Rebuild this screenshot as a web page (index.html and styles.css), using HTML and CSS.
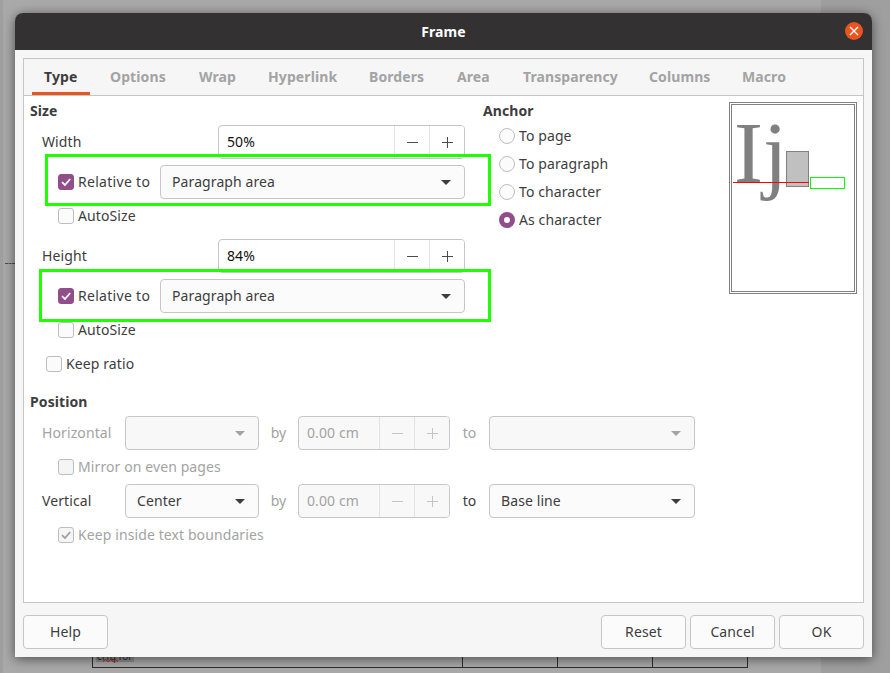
FILE: index.html
```html
<!DOCTYPE html>
<html lang="en">

<head>
    <meta charset="UTF-8">
    <title>Frame</title>
    <link rel="stylesheet" href="styles.css">
</head>

<body>
    <!-- bits of the document behind the dialog -->
    <div class="doc-page">
        <div class="doc-dash"></div>
        <div class="doc-table">
            <div class="doc-cell doc-cell-first">
                <span class="doc-word">crfq for</span>
                <svg class="doc-squiggle" width="16" height="5" viewBox="0 0 16 5"><path d="M0 3.5L2.5 1.5L5 3.5L7.5 1.5L10 3.5L12.5 1.5L15 3.5" stroke="#b02020" fill="none"/></svg>
            </div>
            <div class="doc-cell"></div>
            <div class="doc-cell"></div>
            <div class="doc-cell"></div>
        </div>
    </div>

    <div class="dialog">
        <div class="titlebar">
            <span class="title">Frame</span>
            <span class="close">
                <svg width="10" height="10" viewBox="0 0 10 10"><path d="M1 1L9 9M9 1L1 9" stroke="#fff" stroke-width="1.4" fill="none"/></svg>
            </span>
        </div>

        <div class="body">
            <div class="notebook">
                <div class="tabs">
                    <div class="tab active"><span>Type</span></div>
                    <div class="tab"><span>Options</span></div>
                    <div class="tab"><span>Wrap</span></div>
                    <div class="tab"><span>Hyperlink</span></div>
                    <div class="tab"><span>Borders</span></div>
                    <div class="tab"><span>Area</span></div>
                    <div class="tab"><span>Transparency</span></div>
                    <div class="tab"><span>Columns</span></div>
                    <div class="tab"><span>Macro</span></div>
                </div>

                <div class="panel">
                    <div class="top">
                        <div class="size-col">
                            <div class="heading">Size</div>

                            <div class="row field-row">
                                <label class="field-label">Width</label>
                                <div class="spin spin-wide">
                                    <span class="spin-value">50%</span>
                                    <span class="spin-btn"><svg width="11" height="11" viewBox="0 0 11 11"><path d="M0 5.5H11" stroke="#4a4a4a" fill="none"/></svg></span>
                                    <span class="spin-btn"><svg width="11" height="11" viewBox="0 0 11 11"><path d="M0 5.5H11M5.5 0V11" stroke="#4a4a4a" fill="none"/></svg></span>
                                </div>
                            </div>
                            <div class="row relative-row">
                                <span class="check on"><svg width="12" height="12" viewBox="0 0 12 12"><path d="M2 6.2L5 9L10.2 3" stroke="#fff" stroke-width="1.8" fill="none"/></svg></span>
                                <label class="relative-label">Relative to</label>
                                <div class="select select-wide"><span>Paragraph area</span><i class="arrow"></i></div>
                            </div>
                            <div class="check-row auto-row">
                                <span class="check"></span>
                                <label>AutoSize</label>
                            </div>

                            <div class="row field-row height-row">
                                <label class="field-label">Height</label>
                                <div class="spin spin-wide">
                                    <span class="spin-value">84%</span>
                                    <span class="spin-btn"><svg width="11" height="11" viewBox="0 0 11 11"><path d="M0 5.5H11" stroke="#4a4a4a" fill="none"/></svg></span>
                                    <span class="spin-btn"><svg width="11" height="11" viewBox="0 0 11 11"><path d="M0 5.5H11M5.5 0V11" stroke="#4a4a4a" fill="none"/></svg></span>
                                </div>
                            </div>
                            <div class="row relative-row">
                                <span class="check on"><svg width="12" height="12" viewBox="0 0 12 12"><path d="M2 6.2L5 9L10.2 3" stroke="#fff" stroke-width="1.8" fill="none"/></svg></span>
                                <label class="relative-label">Relative to</label>
                                <div class="select select-wide"><span>Paragraph area</span><i class="arrow"></i></div>
                            </div>
                            <div class="check-row auto-row">
                                <span class="check"></span>
                                <label>AutoSize</label>
                            </div>

                            <div class="check-row ratio-row">
                                <span class="check"></span>
                                <label>Keep ratio</label>
                            </div>
                        </div>

                        <div class="anchor-col">
                            <div class="heading">Anchor</div>
                            <div class="radio-row"><span class="radio"></span><label>To page</label></div>
                            <div class="radio-row"><span class="radio"></span><label>To paragraph</label></div>
                            <div class="radio-row"><span class="radio"></span><label>To character</label></div>
                            <div class="radio-row"><span class="radio on"></span><label>As character</label></div>
                        </div>

                        <svg class="preview" width="128" height="192" viewBox="0 0 128 192">
                            <rect x="0.5" y="0.5" width="127" height="191" fill="#fff" stroke="#808080"/>
                            <rect x="2.5" y="2.5" width="123" height="187" fill="#fff" stroke="#808080"/>
                            <text x="5" y="80" class="preview-text">Ij</text>
                            <rect x="57.5" y="49.5" width="22" height="35" fill="#c0c0c0" stroke="#808080"/>
                            <path d="M4 80.5H80" stroke="#ff0000" fill="none"/>
                            <rect x="81.5" y="75.5" width="34" height="11" fill="#fff" stroke="#00ff00"/>
                        </svg>
                    </div>

                    <div class="heading position-heading">Position</div>

                    <div class="row pos-row off">
                        <label class="pos-label">Horizontal</label>
                        <div class="select select-pos disabled"><span></span><i class="arrow"></i></div>
                        <label class="by">by</label>
                        <div class="spin spin-small disabled">
                            <span class="spin-value">0.00 cm</span>
                            <span class="spin-btn"><svg width="11" height="11" viewBox="0 0 11 11"><path d="M0 5.5H11" stroke="#c4c4c4" fill="none"/></svg></span>
                            <span class="spin-btn"><svg width="11" height="11" viewBox="0 0 11 11"><path d="M0 5.5H11M5.5 0V11" stroke="#c4c4c4" fill="none"/></svg></span>
                        </div>
                        <label class="to">to</label>
                        <div class="select select-to disabled"><span></span><i class="arrow"></i></div>
                    </div>
                    <div class="check-row auto-row off">
                        <span class="check disabled"></span>
                        <label>Mirror on even pages</label>
                    </div>
                    <div class="row pos-row">
                        <label class="pos-label">Vertical</label>
                        <div class="select select-pos"><span>Center</span><i class="arrow"></i></div>
                        <label class="by by-off">by</label>
                        <div class="spin spin-small disabled off">
                            <span class="spin-value">0.00 cm</span>
                            <span class="spin-btn"><svg width="11" height="11" viewBox="0 0 11 11"><path d="M0 5.5H11" stroke="#c4c4c4" fill="none"/></svg></span>
                            <span class="spin-btn"><svg width="11" height="11" viewBox="0 0 11 11"><path d="M0 5.5H11M5.5 0V11" stroke="#c4c4c4" fill="none"/></svg></span>
                        </div>
                        <label class="to">to</label>
                        <div class="select select-to"><span>Base line</span><i class="arrow"></i></div>
                    </div>
                    <div class="check-row auto-row off">
                        <span class="check disabled"><svg width="12" height="12" viewBox="0 0 12 12"><path d="M2 6.2L5 9L10.2 3" stroke="#9a9a9a" stroke-width="1.6" fill="none"/></svg></span>
                        <label>Keep inside text boundaries</label>
                    </div>
                </div>
            </div>

            <div class="footer">
                <button class="btn"><span>Help</span></button>
                <div class="footer-right">
                    <button class="btn"><span>Reset</span></button>
                    <button class="btn"><span>Cancel</span></button>
                    <button class="btn"><span>OK</span></button>
                </div>
            </div>
        </div>

        <!-- green marks drawn over the screenshot -->
        <div class="mark mark-one"></div>
        <div class="mark mark-two"></div>
    </div>
</body>

</html>
```

FILE: styles.css
```css
html,
body {
    margin: 0;
    height: 673px;
    overflow: hidden;
}

body {
    position: relative;
    width: 890px;
    padding: 13px 0 0 15px;
    box-sizing: border-box;
    background-color: #9f9f9f;
    font-family: "Noto Sans", sans-serif;
    font-size: 14px;
    letter-spacing: 0.1px;
    color: #3d3d3d;
}

label,
.select span,
.btn span {
    display: block;
    padding-bottom: 2px;
}

.doc-page {
    position: absolute;
    left: 3px;
    top: 0;
    width: 818px;
    height: 673px;
    background-color: #a9a9a9;
}

.doc-dash {
    position: absolute;
    left: 2px;
    top: 263px;
    width: 10px;
    border-top: 1px dashed #44505c;
}

.doc-table {
    position: absolute;
    left: 89px;
    top: 640px;
    display: flex;
    height: 27px;
    border-bottom: 1px solid #2e2e2e;
}

.doc-cell {
    width: 94px;
    border-right: 1px solid #2e2e2e;
}

.doc-cell-first {
    position: relative;
    width: 369px;
    border-left: 1px solid #2e2e2e;
}

.doc-word {
    position: absolute;
    left: 3px;
    top: 10px;
    padding: 0 1px;
    background-color: #8e8e8e;
    font-size: 10px;
    line-height: 12px;
    white-space: nowrap;
    color: #2e2e2e;
}

.doc-squiggle {
    position: absolute;
    left: 10px;
    top: 18px;
}

.dialog {
    position: relative;
    width: 857px;
    height: 644px;
    border-radius: 9px 9px 0 0;
    background-color: #f6f6f6;
    box-shadow: 0 2px 12px rgba(0, 0, 0, 0.55);
}

.titlebar {
    position: relative;
    display: flex;
    align-items: center;
    justify-content: center;
    height: 37px;
    border-radius: 8px 8px 0 0;
    background-color: #333131;
}

.title {
    color: #fff;
    font-weight: bold;
}

.close {
    position: absolute;
    right: 9px;
    top: 9px;
    display: flex;
    align-items: center;
    justify-content: center;
    width: 18px;
    height: 18px;
    border-radius: 50%;
    background-color: #e95420;
}

.body {
    padding: 8px 8px 0;
}

.notebook {
    height: 543px;
    border: 1px solid #c6c6c6;
    background-color: #fff;
}

.tabs {
    display: grid;
    grid-template-columns: 66px 89px 69px 101px 88px 66px 126px 93px 67px;
    height: 36px;
    padding-left: 8px;
    border-bottom: 1px solid #c6c6c6;
    background-color: #f6f6f6;
    font-weight: bold;
    color: #a3a3a3;
}

.tab span {
    display: block;
    box-sizing: border-box;
    width: fit-content;
    height: 36px;
    padding: 0 12px;
    line-height: 36px;
}

.tab.active span {
    width: 58px;
    color: #3d3d3d;
    border-bottom: 3px solid #e95420;
}

.panel {
    padding: 7px 0 0 6px;
}

.top {
    display: flex;
    height: 277px;
}

.size-col {
    width: 453px;
}

.anchor-col {
    width: 246px;
}

.heading {
    height: 16px;
    font-weight: bold;
    line-height: 16px;
}

.row {
    display: flex;
    align-items: center;
}

.field-row {
    height: 34px;
    margin-top: 6px;
    padding-left: 12px;
}

.height-row {
    margin-top: 15px;
}

.field-label {
    width: 176px;
}

.relative-row {
    height: 34px;
    margin-top: 6px;
    padding-left: 28px;
}

.relative-label {
    width: 82px;
    margin-left: 4px;
    letter-spacing: 0.3px;
}

.check-row {
    display: flex;
    align-items: center;
    height: 16px;
}

.check-row label {
    margin-left: 4px;
}

.auto-row {
    margin-top: 9px;
    padding-left: 28px;
}

.ratio-row {
    margin-top: 18px;
    padding-left: 16px;
}

.check {
    display: flex;
    align-items: center;
    justify-content: center;
    box-sizing: border-box;
    width: 16px;
    height: 16px;
    border: 1px solid #bdbdbd;
    border-radius: 3px;
    background-color: #fbfbfb;
}

.check.on {
    border-color: #924d8b;
    background-color: #924d8b;
}

.check.disabled {
    background-color: #f5f5f5;
}

.select {
    display: flex;
    align-items: center;
    justify-content: space-between;
    box-sizing: border-box;
    height: 34px;
    padding: 0 11px;
    border: 1px solid #c6c6c6;
    border-radius: 4px;
    background-color: #fbfbfb;
}

.select.disabled {
    background-color: #f8f8f8;
}

.arrow {
    width: 0;
    height: 0;
    margin-right: 2px;
    border-left: 5px solid transparent;
    border-right: 5px solid transparent;
    border-top: 5px solid #3d3d3d;
}

.disabled .arrow {
    border-top-color: #a3a3a3;
}

.select-wide {
    width: 305px;
}

.select-pos {
    width: 134px;
}

.select-to {
    width: 206px;
}

.spin {
    display: flex;
    box-sizing: border-box;
    height: 34px;
    border: 1px solid #c6c6c6;
    border-radius: 4px;
    background-color: #fff;
    color: #111;
}

.spin-value {
    flex: 1;
    padding-left: 8px;
    line-height: 31px;
}

.spin-btn {
    display: flex;
    align-items: center;
    justify-content: center;
    box-sizing: border-box;
    width: 35px;
    border-left: 1px solid #e4e4e4;
    background-color: #fff;
}

.spin-btn:last-child {
    border-radius: 0 3px 3px 0;
}

.spin-wide {
    width: 247px;
}

.spin-small {
    width: 152px;
}

.spin.disabled,
.spin.disabled .spin-btn {
    background-color: #f8f8f8;
}

.spin.disabled {
    color: #a3a3a3;
}

.spin.disabled .spin-btn {
    border-left-color: #e2e2e2;
}

.radio-row {
    display: flex;
    align-items: center;
    height: 16px;
    padding-left: 16px;
    margin-bottom: 12px;
}

.heading + .radio-row {
    margin-top: 9px;
}

.radio-row label {
    margin-left: 4px;
}

.radio {
    box-sizing: border-box;
    width: 16px;
    height: 16px;
    border: 1px solid #bdbdbd;
    border-radius: 50%;
    background-color: #fbfbfb;
}

.radio.on {
    border: 5px solid #924d8b;
    background-color: #fff;
}

.preview {
    display: block;
    margin-top: -1px;
}

.preview-text {
    font-family: "Liberation Serif", serif;
    font-size: 87px;
    letter-spacing: 0;
    fill: #808080;
}

.position-heading {
    margin-top: 14px;
}

.pos-row {
    height: 34px;
    margin-top: 6px;
    padding-left: 12px;
}

.pos-row + .check-row + .pos-row {
    margin-top: 9px;
}

.pos-label {
    width: 83px;
}

.by {
    width: 39px;
    text-align: center;
}

.to {
    width: 39px;
    text-align: center;
}

.off,
.by-off {
    color: #a3a3a3;
}

.footer {
    display: flex;
    justify-content: space-between;
    margin-top: 12px;
}

.footer-right {
    display: flex;
    gap: 4px;
}

.btn {
    box-sizing: border-box;
    width: 85px;
    height: 34px;
    padding: 0;
    border: 1px solid #c6c6c6;
    border-radius: 4px;
    background-color: #fbfbfb;
    font-family: inherit;
    font-size: 14px;
    letter-spacing: 0.1px;
    color: #3d3d3d;
}

.mark {
    position: absolute;
    box-sizing: border-box;
    height: 52px;
    border: 3px solid #1eff00;
}

.mark-one {
    left: 30px;
    top: 141px;
    width: 446px;
}

.mark-two {
    left: 24px;
    top: 256px;
    width: 452px;
    height: 53px;
}
```
